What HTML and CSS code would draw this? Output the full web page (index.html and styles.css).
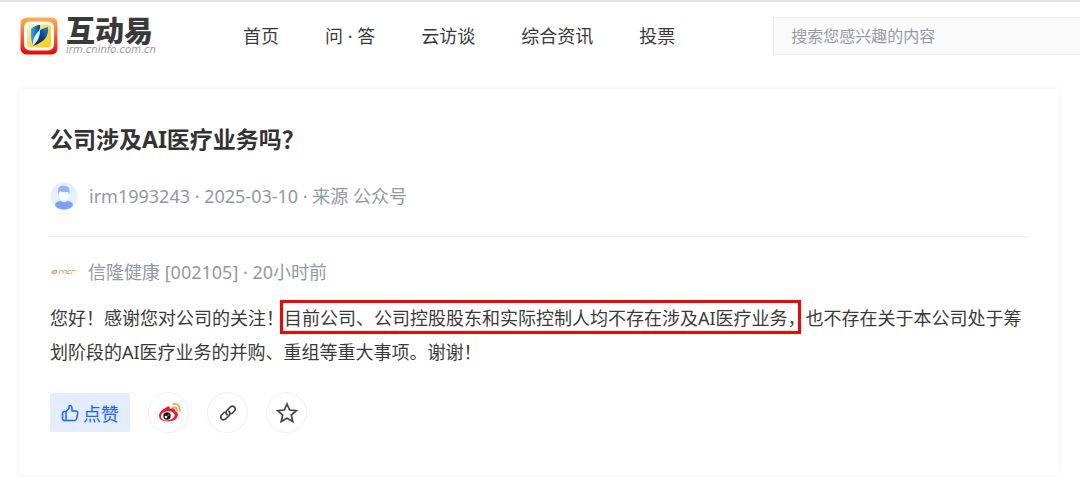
FILE: index.html
```html
<!DOCTYPE html>
<html lang="zh-CN">
<head>
<meta charset="utf-8">
<meta name="viewport" content="width=device-width, initial-scale=1">
<title>互动易</title>
<link rel="stylesheet" href="styles.css">
</head>
<body>
<header class="header">
  <a class="brand" href="#">
    <svg class="brand-mark" viewBox="0 0 38 38" aria-hidden="true">
      <defs>
        <linearGradient id="frame" x1="0" y1="0" x2="0" y2="1"><stop offset="0" stop-color="#ffb34d"/><stop offset=".5" stop-color="#f9603a"/><stop offset="1" stop-color="#f00000"/></linearGradient>
        <linearGradient id="tile" x1="0" y1="0" x2="1" y2="1"><stop offset="0" stop-color="#fff3d8"/><stop offset=".5" stop-color="#ffd84a"/><stop offset="1" stop-color="#ffd000"/></linearGradient>
        <linearGradient id="left" x1="0" y1="0" x2="1" y2="0"><stop offset="0" stop-color="#2fb0e8"/><stop offset="1" stop-color="#0b3f8c"/></linearGradient>
        <linearGradient id="right" x1="1" y1="0" x2="0" y2="1"><stop offset="0" stop-color="#1787d6"/><stop offset=".5" stop-color="#0a3c8f"/><stop offset="1" stop-color="#06195a"/></linearGradient>
      </defs>
      <rect x=".5" y=".5" width="37" height="37" rx="6" fill="url(#frame)"/>
      <rect x="4" y="4.500" width="30" height="29" rx="6" fill="#fff"/>
      <rect x="7" y="7.500" width="24" height="23" rx="3.500" fill="url(#tile)"/>
      <path d="M11 12Q15 8 20 8Q21 12 17 17Q14 22 12.500 28Q10 20 11 12Z" fill="url(#left)"/>
      <path d="M13 25Q14 18 20 13L20 21Q17 26 13 28Z" fill="#d9f3ff"/>
      <path d="M20 13Q24 11 28 10Q29 18 24 23Q19 27 13 29Q18 24 19 20Q20 17 20 13Z" fill="url(#right)"/>
    </svg>
    <span class="brand-text"><span class="brand-name">互动易</span><span class="brand-site">irm.cninfo.com.cn</span></span>
  </a>
  <nav class="nav">
    <a href="#">首页</a><a href="#">问 · 答</a><a href="#">云访谈</a><a href="#">综合资讯</a><a href="#">投票</a>
  </nav>
  <input class="search" type="search" placeholder="搜索您感兴趣的内容" aria-label="搜索">
</header>
<main class="card">
  <h1 class="question">公司涉及AI医疗业务吗？</h1>
  <div class="meta">
    <svg class="avatar" viewBox="0 0 28 28" aria-hidden="true">
      <defs><clipPath id="disc"><circle cx="14" cy="14" r="13.500"/></clipPath></defs>
      <circle cx="14" cy="14" r="13.500" fill="#e5f0ff"/>
      <g clip-path="url(#disc)">
        <path d="M5 28V23Q6 19 11 19Q14 21 17 19Q22 19 23 23V28Z" fill="#7a9fff"/>
        <path d="M11.500 15H16.500V19Q14 21 11.500 19Z" fill="#f2f7ff"/>
      </g>
      <path d="M9 9H19V13Q18 18 14 18Q10 18 9 13Z" fill="#fff"/>
      <path d="M8 12Q7 5 11 4Q15 3 18 5Q20 6 19.500 12H18.500V10Q13 11 10 9L9 12Z" fill="#8fb6ff"/>
    </svg>
    <span>irm1993243 · 2025-03-10 · 来源 公众号</span>
  </div>
  <section class="answer">
    <div class="meta company">
      <svg class="avatar" viewBox="0 0 28 28" aria-hidden="true">
        <g fill="none" stroke="#cfb27e" stroke-linecap="round">
          <ellipse cx="4.500" cy="14" rx="2.500" ry="1.500" transform="rotate(-20 4.500 14)" stroke-width="1.300"/>
          <path d="M2 15.500L7 12M9 15.500L10 12.500H12.500L12 14M13 15.500L14 12.500H16.500L16 15.500M17.500 15.500L18.500 12.500H21M17.500 15.500H20M21.500 15.500L22.500 12.500H25.500" stroke-width="1"/>
        </g>
      </svg>
      <span>信隆健康 [002105] · 20小时前</span>
    </div>
    <p class="reply">您好！感谢您对公司的关注！<span class="marked">目前公司、公司控股股东和实际控制人均不存在涉及AI医疗业务，</span>也不存在关于本公司处于筹划阶段的AI医疗业务的并购、重组等重大事项。谢谢！</p>
    <div class="actions">
      <button class="like" type="button">
        <svg viewBox="0 0 18 18" width="18" height="18" fill="none" stroke="currentColor" stroke-width="1.500" stroke-linejoin="round" aria-hidden="true"><path d="M5 7.500L8 4.500V2.500Q8 1.200 9.300 1.500Q11 2 11 4V7H15Q17 7 16.700 8.800L15.700 14.500Q15.400 16.500 13.500 16.500H3.500Q1.500 16.500 1.500 14.500V9.500Q1.500 7.500 3.500 7.500ZM5 7.500V16.500"/></svg>
        <span>点赞</span>
      </button>
      <button class="round" type="button" aria-label="分享到微博">
        <svg viewBox="0 0 24 24" width="24" height="24" aria-hidden="true">
          <path d="M10 6Q13 4 13 8Q18 6 18 10Q21 11 21 14Q20 20 11 20.500Q2 20 2 15Q2 10 10 6Z" fill="#f5142d"/>
          <ellipse cx="10.800" cy="14.800" rx="7" ry="4.500" transform="rotate(-8 11 15)" fill="#fff"/>
          <circle cx="10" cy="15" r="3.700" fill="#151515"/>
          <circle cx="9" cy="16" r="1.300" fill="#fff"/><circle cx="11.300" cy="14" r=".6" fill="#fff"/>
          <path d="M16 3Q23 2 23 10M16 6.200Q20 6 20 9.500" fill="none" stroke="#ff9f24" stroke-width="1.600" stroke-linecap="round"/>
        </svg>
      </button>
      <button class="round" type="button" aria-label="复制链接">
        <svg viewBox="0 0 24 24" width="22" height="22" fill="none" stroke="#444" stroke-width="1.800" stroke-linecap="round" aria-hidden="true"><path d="M11 14Q8.500 11.500 11 9L14.500 5.500Q16.800 3.500 19 5.500Q21 7.500 19 9.800L16 12.800M13 10Q15.500 12.500 13 15L9.500 18.500Q7.200 20.500 5 18.500Q3 16.500 5 14.200L8 11.200"/></svg>
      </button>
      <button class="round" type="button" aria-label="收藏">
        <svg viewBox="0 0 24 24" width="24" height="24" fill="none" stroke="#444" stroke-width="1.700" stroke-linejoin="miter" aria-hidden="true"><path d="M12 3L14.700 9L21.300 9.600L16.300 14L17.800 20.600L12 17.200L6.200 20.600L7.700 14L2.700 9.600L9.300 9Z"/></svg>
      </button>
    </div>
  </section>
</main>
</body>
</html>
```
FILE: styles.css
```css
* {
  box-sizing: border-box;
}

body {
  margin: 0;
  border-top: 2px solid #e3e7eb;
  background: #fff;
  color: #3a3a3a;
  font-family: "Noto Sans", "Noto Sans CJK SC", sans-serif;
  font-size: 18px;
  overflow-x: hidden;
}

a {
  color: inherit;
  text-decoration: none;
}

.header {
  display: flex;
  align-items: center;
  height: 67px;
  padding-left: 20px;
}

.brand {
  display: flex;
  flex: none;
  align-items: center;
  gap: 8px;
  width: 223px;
}

.brand-mark {
  width: 38px;
  height: 38px;
}

.brand-text {
  display: flex;
  flex-direction: column;
  white-space: nowrap;
}

.brand-name {
  font-size: 29px;
  font-style: oblique 8deg;
  font-weight: 900;
  line-height: 29px;
}

.brand-site {
  color: #999;
  font-family: "DejaVu Sans", sans-serif;
  font-size: 10px;
  font-style: italic;
  line-height: 10px;
}

.nav {
  display: flex;
  flex: none;
  gap: 46px;
  margin-right: 98px;
  line-height: 28px;
}

.search {
  flex: 1;
  min-width: 160px;
  height: 38px;
  padding: 0 17px;
  border: 1px solid #ebebeb;
  border-right: 0;
  border-radius: 2px 0 0 2px;
  background: #fafafa;
  font: inherit;
  font-size: 16px;
  appearance: none;
}

.search::placeholder {
  color: #969aa2;
}

.card {
  margin: 20px 21px 12px 19px;
  padding: 31px 31px 42px;
  border-radius: 2px;
  box-shadow: 0 0 5px rgba(0, 0, 0, 0.08);
}

.question {
  margin: 0;
  color: #333;
  font-size: 23px;
  line-height: 38px;
}

.meta {
  display: flex;
  align-items: center;
  gap: 11px;
  margin-top: 24px;
  color: #9298a6;
  line-height: 28px;
}

.avatar {
  flex: none;
  width: 28px;
  height: 28px;
}

.answer {
  margin-top: 26px;
  padding-top: 21px;
  border-top: 1px solid #eee;
}

.company {
  margin-top: 0;
  gap: 10px;
}

.reply {
  margin: 15px 0 0;
  line-height: 34px;
}

.marked {
  position: relative;
}

.marked::after {
  position: absolute;
  inset: -6px 5px -4px -4px;
  border: 3px solid #f00;
  content: "";
  pointer-events: none;
}

.actions {
  display: flex;
  align-items: center;
  gap: 18px;
  margin-top: 23px;
}

.like {
  display: flex;
  align-items: center;
  justify-content: center;
  gap: 4px;
  height: 39px;
  padding: 0 11px;
  border: 0;
  border-radius: 2px;
  background: #e3edff;
  color: #1764ff;
  font: inherit;
}

.round {
  display: grid;
  place-items: center;
  width: 41px;
  height: 41px;
  padding: 0;
  border: 1px solid #eef0fa;
  border-radius: 50%;
  background: #fff;
}
```
